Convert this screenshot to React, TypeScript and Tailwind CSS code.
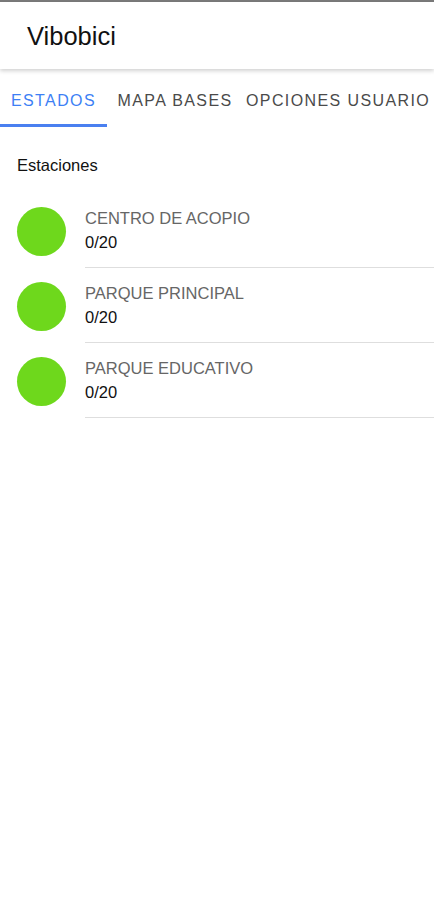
import React from "react";

const stations = [
  { name: "CENTRO DE ACOPIO", count: "0/20" },
  { name: "PARQUE PRINCIPAL", count: "0/20" },
  { name: "PARQUE EDUCATIVO", count: "0/20" },
];

export default function App() {
  return (
    <div
      className="w-[434px] h-[900px] bg-white overflow-hidden"
      style={{ fontFamily: '"Liberation Sans", Arial, sans-serif' }}
    >
      <div className="h-[2px] bg-[#7a7a7a]" />
      <header className="h-[67px] flex items-center pl-[27px] pt-[2px] bg-white shadow-[0_2px_4px_rgba(0,0,0,0.18)] relative z-10">
        <span className="text-[25.5px] text-[#111] leading-none">Vibobici</span>
      </header>
      <nav className="flex h-[58px] items-stretch">
        <div className="w-[107px] flex flex-col">
          <div className="flex-1 flex items-center justify-center pt-[8px] text-[16px] tracking-[1.4px] text-[#3d7ff5]">
            ESTADOS
          </div>
          <div className="h-[3px] bg-[#4a80f0]" />
        </div>
        <div className="w-[136px] flex items-center justify-center pt-[5px] text-[16px] tracking-[1.4px] text-[#4a4a4a]">
          MAPA BASES
        </div>
        <div className="flex-1 flex items-center justify-start pl-[3px] pt-[5px] text-[16px] tracking-[1.4px] text-[#4a4a4a] whitespace-nowrap">
          OPCIONES USUARIO
        </div>
      </nav>
      <div className="pl-[17px] pt-[28px] text-[16.5px] leading-[20px] text-[#111]">Estaciones</div>
      <ul className="mt-[18px]">
        {stations.map((s) => (
          <li key={s.name} className="flex items-stretch h-[75px]">
            <div className="w-[85px] flex items-center pl-[17px] pt-[1px]">
              <div className="w-[49px] h-[49px] rounded-full bg-[#6ed81c]" />
            </div>
            <div className="flex-1 flex flex-col justify-center border-b border-[#dedede]">
              <div className="text-[16.5px] text-[#666] leading-[20px]">{s.name}</div>
              <div className="text-[16.5px] text-[#111] leading-[20px] mt-[4px]">{s.count}</div>
            </div>
          </li>
        ))}
      </ul>
    </div>
  );
}
